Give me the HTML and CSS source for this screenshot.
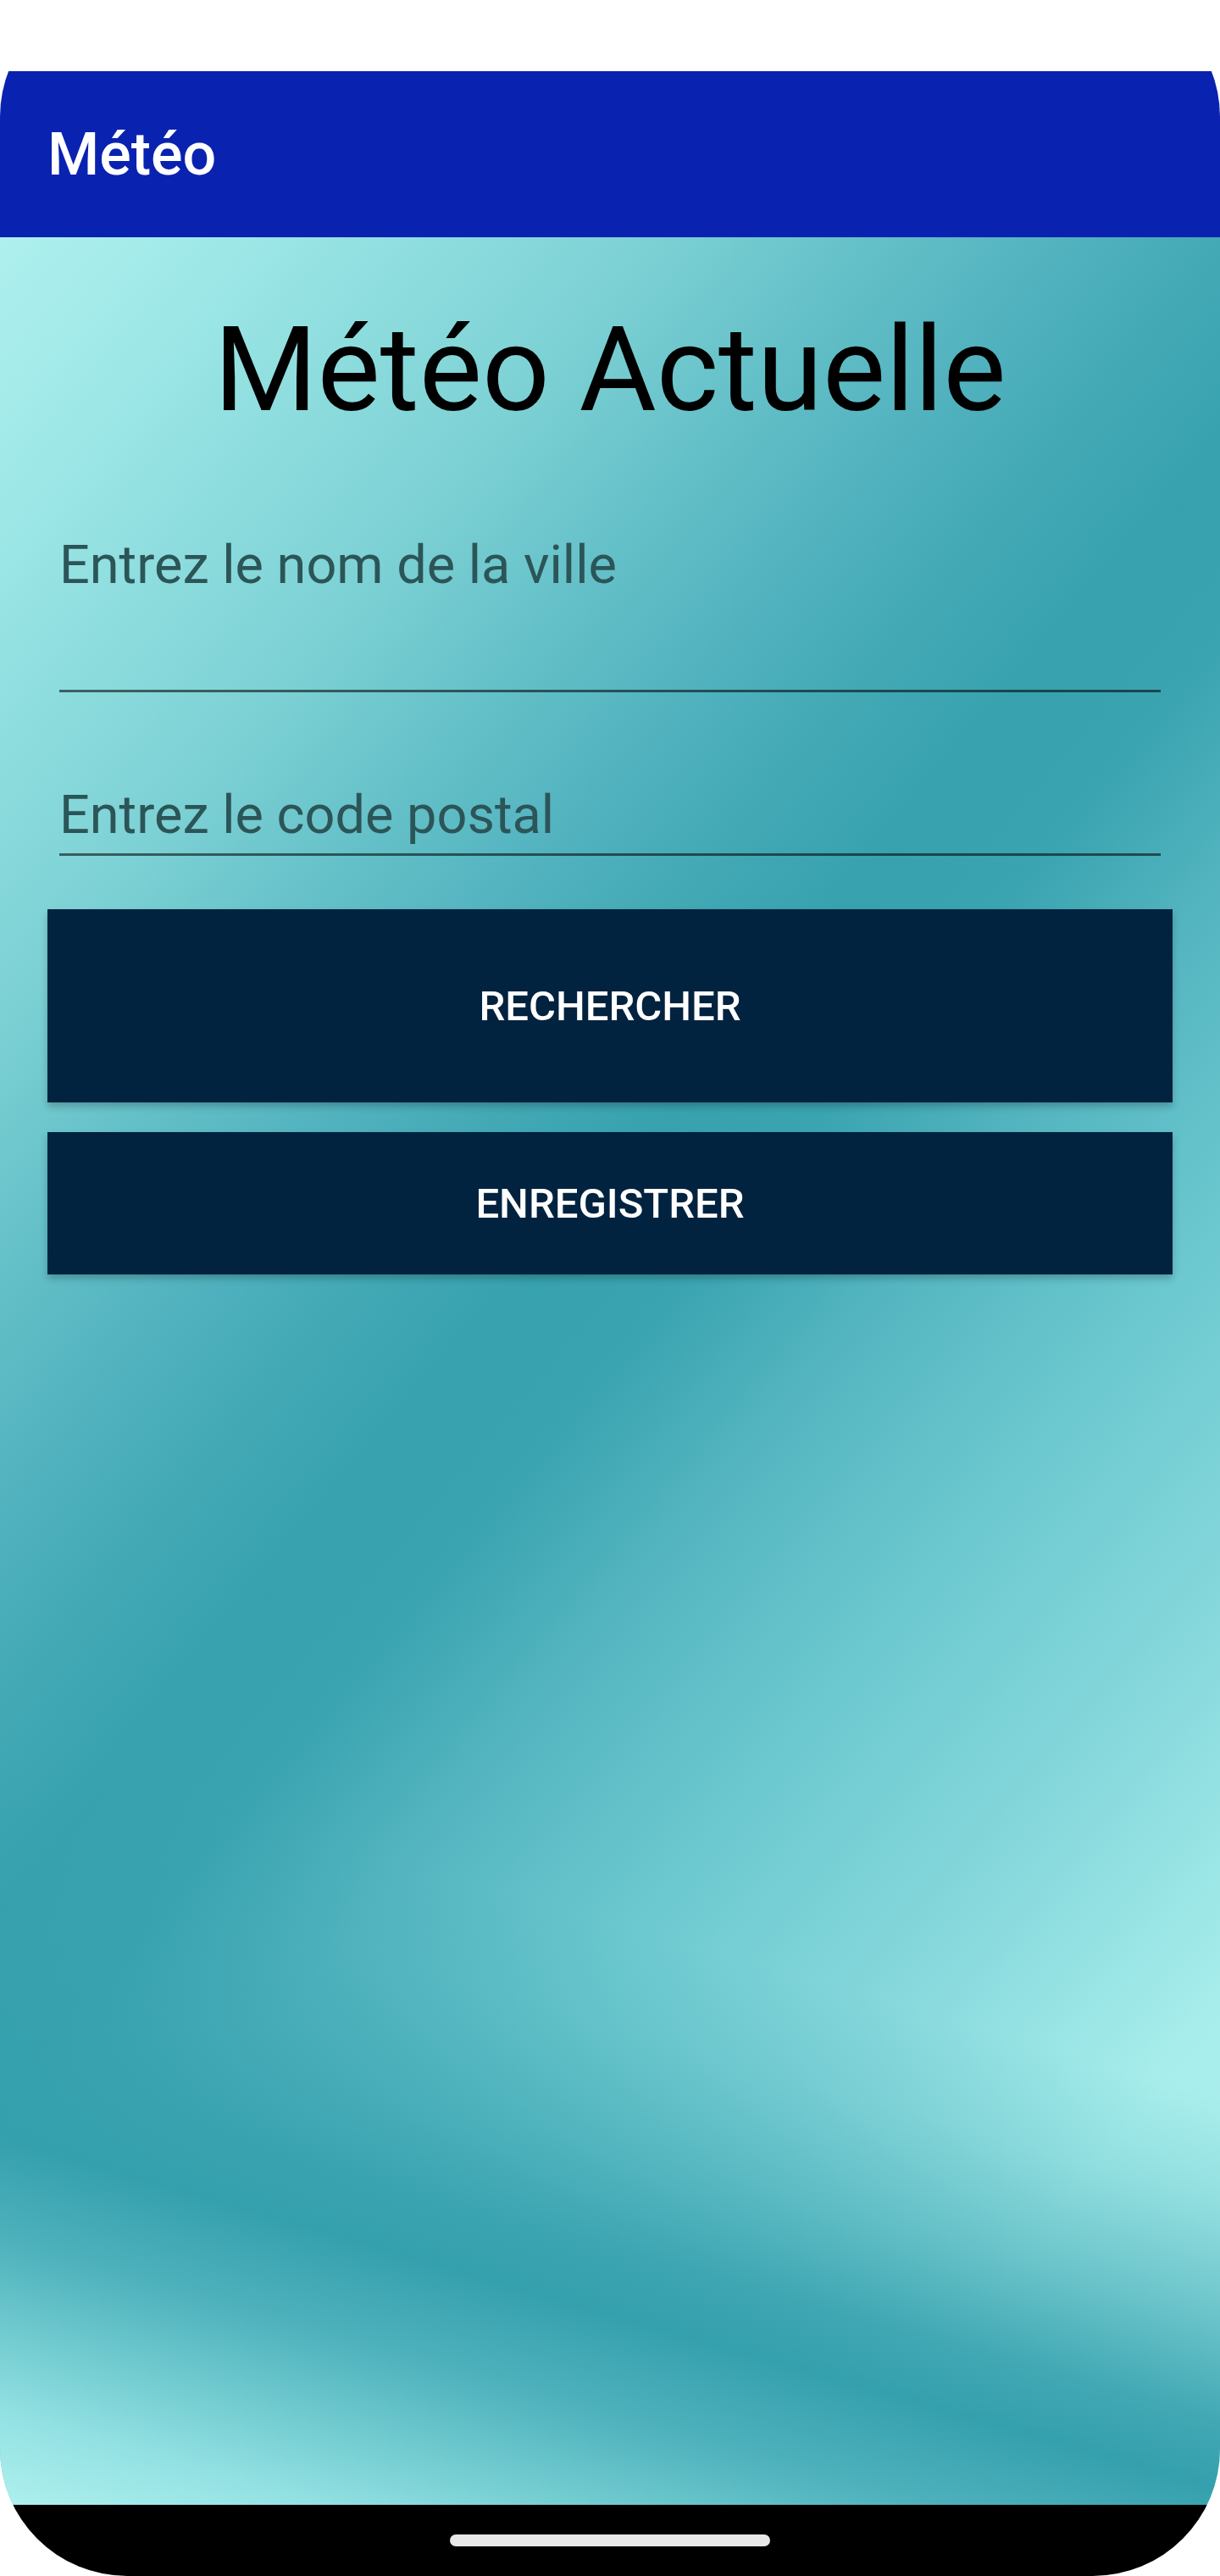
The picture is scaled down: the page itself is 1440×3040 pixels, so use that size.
FILE: index.html
```html
<!DOCTYPE html>
<html lang="fr">
<head>
<meta charset="utf-8">
<title>Météo</title>
<link rel="stylesheet" href="styles.css">
</head>
<body>
<div class="phone">
  <div class="status"></div>
  <header class="appbar"><span class="appbar-title">Météo</span></header>
  <main class="content">
    <h1 class="title">Météo Actuelle</h1>
    <div class="field field-city"><span class="hint">Entrez le nom de la ville</span></div>
    <div class="field field-zip"><span class="hint">Entrez le code postal</span></div>
    <button class="btn btn-search">RECHERCHER</button>
    <button class="btn btn-save">ENREGISTRER</button>
  </main>
  <footer class="navbar"><span class="home-indicator"></span></footer>
</div>
</body>
</html>
```

FILE: styles.css
```css
html, body {
  margin: 0;
  padding: 0;
  overflow: hidden;
  background: #ffffff;
}

body {
  font-family: Roboto, "Noto Sans", "Liberation Sans", sans-serif;
}

.phone {
  margin-top: -12px;
  height: 3052px;
  border-radius: 150px;
  overflow: hidden;
  display: flex;
  flex-direction: column;
  background: #ffffff;
}

.status {
  flex: none;
  height: 96px;
  background: #ffffff;
}

.appbar {
  flex: none;
  height: 196px;
  background: #0a22b0;
  display: flex;
  align-items: center;
  padding-left: 56px;
}

.appbar-title {
  color: #ffffff;
  font-size: 70px;
  font-weight: 500;
  line-height: 1;
}

.content {
  flex: 1;
  display: flex;
  flex-direction: column;
  background:
    linear-gradient(196deg,
      rgba(53, 160, 173, 0) 0%,
      rgba(53, 160, 173, 0) 71%,
      rgba(53, 160, 173, 0.2) 75%,
      rgba(53, 160, 173, 0.55) 79.5%,
      rgba(53, 160, 173, 0.9) 83.5%,
      #35a0ad 86%,
      #4fb2bd 90%,
      #72ccd0 93.5%,
      #93e1e3 96.5%,
      #aef0ee 100%),
    linear-gradient(130deg,
      #aef0ee 0%,
      #9fe8e8 7%,
      #7cd1d4 21%,
      #64c0c8 28%,
      #52b3bf 34%,
      #41a8b4 40%,
      #37a2ae 45%,
      #3aa4b0 50%,
      #55b6c1 57%,
      #6fcbd1 67%,
      #86d8dc 76%,
      #a8eeec 87%,
      #aef0ee 100%);
}

.title {
  margin: 74px 0 0;
  font-size: 140px;
  font-weight: 400;
  line-height: 164px;
  color: #000000;
  text-align: center;
}

.field {
  box-sizing: border-box;
  margin: 0 70px;
  border-bottom: 3px solid rgba(0, 0, 0, 0.56);
}

.field-city {
  margin-top: 112px;
  height: 187px;
}

.field-zip {
  margin-top: 108px;
  height: 85px;
}

.hint {
  display: block;
  font-size: 63px;
  line-height: 73px;
  color: #2c5558;
}

.btn {
  display: flex;
  align-items: center;
  justify-content: center;
  margin: 0 56px;
  border: none;
  background: #02233f;
  color: #ffffff;
  font-family: Roboto, "Noto Sans", "Liberation Sans", sans-serif;
  font-size: 49px;
  font-weight: 500;
  letter-spacing: 0;
  box-shadow: 0 5px 8px rgba(0, 0, 0, 0.22);
  padding: 0;
}

.btn-search {
  margin-top: 63px;
  height: 228px;
}

.btn-save {
  margin-top: 35px;
  height: 168px;
}

.navbar {
  flex: none;
  height: 84px;
  background: #000000;
  display: flex;
  align-items: center;
  justify-content: center;
}

.home-indicator {
  width: 378px;
  height: 14px;
  border-radius: 7px;
  background: #e8e8e8;
}
```
